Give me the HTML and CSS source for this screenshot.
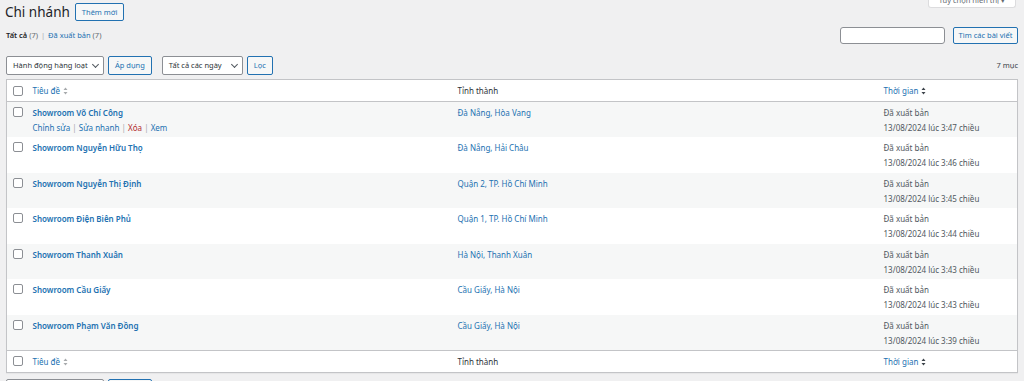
FILE: index.html
```html
<!DOCTYPE html>
<html lang="vi">
<head>
    <meta charset="UTF-8">
    <title>Chi nhánh</title>
    <link rel="stylesheet" href="styles.css">
</head>
<body>

<div class="screen-tab">Tùy chọn hiển thị <span class="caret">▾</span></div>

<div class="wrap">
    <div class="page-head">
        <h1>Chi nhánh</h1>
        <a class="btn btn-outline" href="#">Thêm mới</a>
    </div>

    <div class="filter-line">
        <ul class="subsubsub">
            <li class="current">Tất cả <span class="count">(7)</span></li>
            <li class="sep">|</li>
            <li><a href="#">Đã xuất bản</a> <span class="count">(7)</span></li>
        </ul>
        <div class="search-box">
            <input type="text" class="search-input">
            <a class="btn btn-outline" href="#">Tìm các bài viết</a>
        </div>
    </div>

    <div class="tablenav">
        <div class="select">Hành động hàng loạt <span class="chev"></span></div>
        <a class="btn btn-outline" href="#">Áp dụng</a>
        <div class="select select-date">Tất cả các ngày <span class="chev"></span></div>
        <a class="btn btn-outline" href="#">Lọc</a>
        <span class="num-items">7 mục</span>
    </div>

    <table class="list-table">
        <colgroup>
            <col class="col-check">
            <col class="col-title">
            <col class="col-city">
            <col>
        </colgroup>
        <thead>
            <tr>
                <th><span class="cb"></span></th>
                <th><a href="#">Tiêu đề</a> <svg class="sort" viewBox="0 0 6 10"><path d="M3 0.5 L5.5 3.8 H0.5 Z M3 9.5 L5.5 6.2 H0.5 Z"/></svg></th>
                <th>Tỉnh thành</th>
                <th><a href="#">Thời gian</a> <svg class="sort sort-dark" viewBox="0 0 6 10"><path d="M3 0.5 L5.5 3.8 H0.5 Z M3 9.5 L5.5 6.2 H0.5 Z"/></svg></th>
            </tr>
        </thead>
        <tbody>
            <tr>
                <td><span class="cb"></span></td>
                <td>
                    <a class="row-title" href="#">Showroom Võ Chí Công</a>
                    <div class="row-actions">
                        <a href="#">Chỉnh sửa</a> | <a href="#">Sửa nhanh</a> | <a class="trash" href="#">Xóa</a> | <a href="#">Xem</a>
                    </div>
                </td>
                <td><a href="#">Đà Nẵng, Hòa Vang</a></td>
                <td>Đã xuất bản<br>13/08/2024 lúc 3:47 chiều</td>
            </tr>
            <tr>
                <td><span class="cb"></span></td>
                <td><a class="row-title" href="#">Showroom Nguyễn Hữu Thọ</a></td>
                <td><a href="#">Đà Nẵng, Hải Châu</a></td>
                <td>Đã xuất bản<br>13/08/2024 lúc 3:46 chiều</td>
            </tr>
            <tr>
                <td><span class="cb"></span></td>
                <td><a class="row-title" href="#">Showroom Nguyễn Thị Định</a></td>
                <td><a href="#">Quận 2, TP. Hồ Chí Minh</a></td>
                <td>Đã xuất bản<br>13/08/2024 lúc 3:45 chiều</td>
            </tr>
            <tr>
                <td><span class="cb"></span></td>
                <td><a class="row-title" href="#">Showroom Điện Biên Phủ</a></td>
                <td><a href="#">Quận 1, TP. Hồ Chí Minh</a></td>
                <td>Đã xuất bản<br>13/08/2024 lúc 3:44 chiều</td>
            </tr>
            <tr>
                <td><span class="cb"></span></td>
                <td><a class="row-title" href="#">Showroom Thanh Xuân</a></td>
                <td><a href="#">Hà Nội, Thanh Xuân</a></td>
                <td>Đã xuất bản<br>13/08/2024 lúc 3:43 chiều</td>
            </tr>
            <tr>
                <td><span class="cb"></span></td>
                <td><a class="row-title" href="#">Showroom Cầu Giấy</a></td>
                <td><a href="#">Cầu Giấy, Hà Nội</a></td>
                <td>Đã xuất bản<br>13/08/2024 lúc 3:43 chiều</td>
            </tr>
            <tr>
                <td><span class="cb"></span></td>
                <td><a class="row-title" href="#">Showroom Phạm Văn Đồng</a></td>
                <td><a href="#">Cầu Giấy, Hà Nội</a></td>
                <td>Đã xuất bản<br>13/08/2024 lúc 3:39 chiều</td>
            </tr>
        </tbody>
        <tfoot>
            <tr>
                <th><span class="cb"></span></th>
                <th><a href="#">Tiêu đề</a> <svg class="sort" viewBox="0 0 6 10"><path d="M3 0.5 L5.5 3.8 H0.5 Z M3 9.5 L5.5 6.2 H0.5 Z"/></svg></th>
                <th>Tỉnh thành</th>
                <th><a href="#">Thời gian</a> <svg class="sort sort-dark" viewBox="0 0 6 10"><path d="M3 0.5 L5.5 3.8 H0.5 Z M3 9.5 L5.5 6.2 H0.5 Z"/></svg></th>
            </tr>
        </tfoot>
    </table>

    <div class="tablenav tablenav-bottom">
        <div class="select">Hành động hàng loạt <span class="chev"></span></div>
        <a class="btn btn-outline" href="#">Áp dụng</a>
    </div>
</div>

</body>
</html>
```

FILE: styles.css
```css
* {
    margin: 0;
    padding: 0;
    box-sizing: border-box;
}

body {
    font-family: "Noto Sans", "Open Sans", sans-serif;
    font-size: 8px;
    line-height: 15px;
    color: #3c434a;
    background: #f0f0f1;
    overflow: hidden;
    white-space: nowrap;
}

a {
    color: #2271b1;
    text-decoration: none;
}

.screen-tab {
    float: right;
    margin: -6px 8px 0 0;
    height: 14px;
    padding: 0 10px;
    background: #fff;
    border: 1px solid #dcdcde;
    border-top: none;
    border-radius: 0 0 3px 3px;
    color: #646970;
    font-size: 7.5px;
    line-height: 13px;
}

.caret {
    font-size: 7px;
}

.wrap {
    padding: 0 6px;
}

/* header */

.page-head {
    display: flex;
    align-items: center;
    gap: 5px;
    padding-top: 3px;
    height: 21px;
}

h1 {
    font-size: 13.5px;
    font-weight: 400;
    color: #1d2327;
    line-height: 18px;
    margin-left: -1px;
}

.btn {
    display: inline-flex;
    align-items: center;
    justify-content: center;
    height: 18px;
    padding: 0 6px;
    font-size: 7.5px;
    border-radius: 2px;
}

.btn-outline {
    border: 1px solid #2271b1;
    background: #f6f7f7;
    color: #2271b1;
}

/* status links + search */

.filter-line {
    display: flex;
    justify-content: space-between;
    align-items: center;
    margin-top: 6px;
    height: 17px;
}

.subsubsub {
    list-style: none;
    display: flex;
    gap: 3px;
    font-size: 7.5px;
    color: #646970;
}

.subsubsub .current {
    color: #1d2327;
    font-weight: 600;
}

.subsubsub .current .count {
    font-weight: 400;
    color: #646970;
}

.sep {
    color: #a7aaad;
}

.search-box {
    display: flex;
    gap: 8px;
}

.search-input {
    width: 105px;
    height: 17px;
    border: 1px solid #8c8f94;
    border-radius: 3px;
    background: #fff;
}

.search-box .btn {
    height: 17px;
    width: 65px;
    padding: 0;
}

/* tablenav */

.tablenav {
    display: flex;
    align-items: center;
    gap: 4px;
    margin-top: 12px;
    height: 19px;
}

.select {
    display: flex;
    align-items: center;
    justify-content: space-between;
    width: 98px;
    height: 19px;
    padding: 0 5px 0 6px;
    background: #fff;
    border: 1px solid #8c8f94;
    border-radius: 2px;
    color: #2c3338;
    font-size: 7.5px;
}

.select-date {
    width: 81px;
    margin-left: 6px;
}

.chev {
    width: 5px;
    height: 5px;
    border-right: 1.2px solid #50575e;
    border-bottom: 1.2px solid #50575e;
    transform: rotate(45deg);
    margin-top: -3px;
}

.tablenav .btn {
    height: 19px;
}

.num-items {
    margin-left: auto;
    font-size: 7.5px;
    color: #3c434a;
}

.tablenav-bottom {
    margin-top: 6px;
}

/* list table */

.list-table {
    width: 100%;
    margin-top: 4px;
    border-collapse: collapse;
    table-layout: fixed;
    background: #fff;
    border: 1px solid #c3c4c7;
    box-shadow: 0 1px 1px rgba(0, 0, 0, 0.04);
}

.col-check {
    width: 20px;
}

.col-title {
    width: 425px;
}

.col-city {
    width: 426px;
}

.list-table th {
    text-align: left;
    font-weight: 400;
    color: #2c3338;
    height: 22px;
    padding: 0 6px;
    vertical-align: middle;
}

.list-table th:first-child,
.list-table td:first-child {
    padding: 0 0 0 6px;
}

.list-table thead th {
    border-bottom: 1px solid #c3c4c7;
}

.list-table tfoot th {
    border-top: 1px solid #c3c4c7;
}

.list-table td {
    height: 35.5px;
    padding: 3px 6px 0;
    vertical-align: top;
    color: #50575e;
}

.list-table td:first-child {
    padding-top: 5px;
}

.list-table tbody tr:nth-child(odd) {
    background: #f6f7f7;
}

.cb {
    display: block;
    width: 10px;
    height: 10px;
    background: #fff;
    border: 1px solid #8c8f94;
    border-radius: 2px;
}

.row-title {
    font-weight: 600;
}

.row-actions {
    color: #a7aaad;
}

.trash {
    color: #b32d2e;
}

.sort {
    width: 5px;
    height: 8px;
    vertical-align: -1px;
    margin-left: 1px;
    fill: #a7aaad;
}

.sort-dark {
    fill: #3c434a;
}
```
